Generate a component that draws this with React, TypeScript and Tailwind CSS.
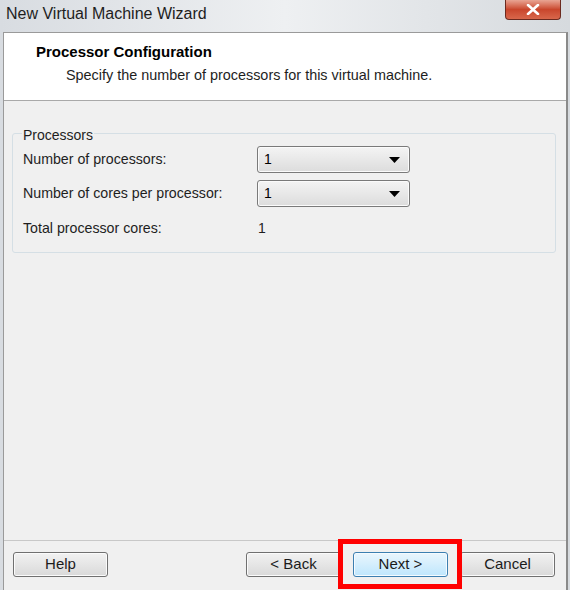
import { ReactNode } from "react";

const font = { fontFamily: '"Liberation Sans", Arial, sans-serif' };

const Dropdown = ({ value }: { value: string }) => (
  <div className="flex h-[27px] w-[153px] items-center justify-between rounded-[3px] border border-[#7a7a7a] bg-gradient-to-b from-[#f4f4f4] to-[#dcdcdc] px-[6px] shadow-[inset_0_0_0_1px_#fbfbfb]">
    <span className="text-[14px] text-black">{value}</span>
    <svg width="11" height="6" viewBox="0 0 11 6" className="mr-[3px]">
      <path d="M0 0 L11 0 L5.5 6 Z" fill="#000" />
    </svg>
  </div>
);

const WinButton = ({
  children,
  primary,
}: {
  children: ReactNode;
  primary?: boolean;
}) => (
  <div
    className={
      primary
        ? "flex h-[25px] w-[95px] items-center justify-center rounded-[3px] border border-[#3c7fb1] bg-gradient-to-b from-[#eaf6fd] to-[#bee6fd] text-[15px] text-[#1b1b1b] shadow-[inset_0_0_0_1px_#f5fbff]"
        : "flex h-[25px] w-[95px] items-center justify-center rounded-[3px] border border-[#707070] bg-gradient-to-b from-[#f2f2f2] to-[#d9d9d9] text-[15px] text-[#1b1b1b] shadow-[inset_0_0_0_1px_#fbfbfb]"
    }
  >
    {children}
  </div>
);

export default function App() {
  return (
    <div
      className="flex h-[590px] w-[570px] flex-col overflow-hidden bg-gradient-to-r from-[#d8dce1] via-[#eef0f2] to-[#d6dade]"
      style={font}
    >
      {/* title bar */}
      <div className="flex h-[32px] shrink-0 items-start justify-between">
        <span className="pl-[6px] pt-[2px] text-[16px] text-[#1e1e1e]">
          New Virtual Machine Wizard
        </span>
        <div className="mr-[9px] flex h-[20px] w-[56px] items-center justify-center rounded-b-[4px] border border-t-0 border-[#6b2a1f] bg-gradient-to-b from-[#e8a493] via-[#c9462c] to-[#d8674b]">
          <svg width="14" height="11" viewBox="0 0 14 11">
            <path
              d="M2 1 L12 10 M12 1 L2 10"
              stroke="#fff"
              strokeWidth="2.6"
              strokeLinecap="round"
            />
          </svg>
        </div>
      </div>

      {/* panel */}
      <div className="ml-[3px] mr-[2px] flex flex-1 flex-col border-l border-t border-r-2 border-l-[#9a9a9a] border-t-[#9a9a9a] border-r-[#8a8a8a] bg-[#f0f0f0]">
        <div className="h-[68px] shrink-0 border-b border-[#a9a9a9] bg-white pt-[8px]">
          <div className="pl-[32px] text-[15px] font-bold text-black">
            Processor Configuration
          </div>
          <div className="pl-[62px] pt-[1px] text-[14.4px] text-[#1e1e1e]">
            Specify the number of processors for this virtual machine.
          </div>
        </div>

        <div className="flex-1 border-b border-[#c8c8c8] pl-[8px] pr-[10px] pt-[32px]">
          <div className="relative h-[120px] rounded-[3px] border border-[#d5dfe5] pl-[10px] pt-[12px]">
            <span className="absolute left-[9px] top-[-9px] bg-[#f0f0f0] px-[1px] text-[14px] text-[#1e1e1e]">
              Processors
            </span>
            <div className="flex items-center">
              <span className="w-[234px] text-[14.2px] text-[#1e1e1e]">
                Number of processors:
              </span>
              <Dropdown value="1" />
            </div>
            <div className="mt-[7px] flex items-center">
              <span className="w-[234px] text-[14.2px] text-[#1e1e1e]">
                Number of cores per processor:
              </span>
              <Dropdown value="1" />
            </div>
            <div className="mt-[11px] flex items-center">
              <span className="w-[235px] text-[14.2px] text-[#1e1e1e]">
                Total processor cores:
              </span>
              <span className="text-[14px] text-[#1e1e1e]">1</span>
            </div>
          </div>
        </div>

        <div className="flex h-[49px] shrink-0 items-start pl-[9px] pt-[11px]">
          <WinButton>Help</WinButton>
          <div className="ml-[138px] flex gap-[12px]">
            <WinButton>&lt; Back</WinButton>
            <div className="relative">
              <WinButton primary>Next &gt;</WinButton>
              <div className="absolute left-[-15px] top-[-13px] h-[50px] w-[124px] border-[5px] border-[#ff0000]" />
            </div>
            <WinButton>Cancel</WinButton>
          </div>
        </div>
      </div>
    </div>
  );
}
